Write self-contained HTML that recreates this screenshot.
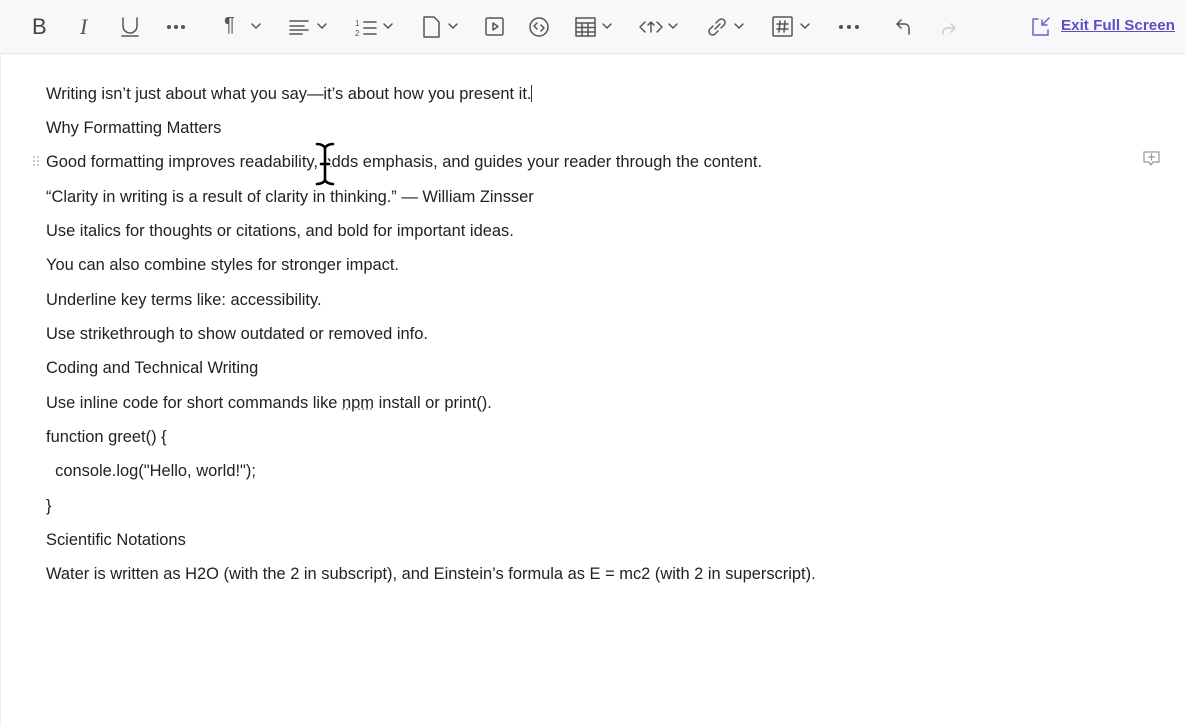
<!DOCTYPE html>
<html><head><meta charset="utf-8"><style>
*{margin:0;padding:0;box-sizing:border-box}
body{width:1186px;height:726px;background:#fff;font-family:"Liberation Sans",sans-serif;overflow:hidden;position:relative}
.tb{position:absolute;left:0;top:0;width:1186px;height:54px;background:#f8f8fb;border-bottom:1px solid #e6e6ec}
.ic{position:absolute;top:14px}
svg{stroke:#555;fill:none;stroke-width:1.5;stroke-linecap:round;stroke-linejoin:round}
.chev{position:absolute;top:22px}
.exit{position:absolute;left:1061px;top:17px;font-size:15.2px;font-weight:bold;color:#5b4fc4;text-decoration:underline}
.lines{position:absolute;left:46px;top:76.5px;font-size:16.45px;color:#222;line-height:34.35px}
.edge{position:absolute;left:0;top:54px;width:1px;height:672px;background:#eee}
</style></head><body>
<div class="tb">
<div class="ic" style="left:32px;top:14px;font-size:22px;color:#444;font-family:'Liberation Sans'">B</div>
<div class="ic" style="left:80px;top:14px;font-size:22px;color:#555;font-style:italic;font-family:'Liberation Serif'">I</div>
<svg class="ic" style="left:120px" width="20" height="26"><path d="M3 4v8a7 7 0 0 0 14 0V4M2 22h16"/></svg>
<svg class="ic" style="left:165px" width="24" height="26"><circle cx="4" cy="13" r="1.3" fill="#555"/><circle cx="11" cy="13" r="1.3" fill="#555"/><circle cx="18" cy="13" r="1.3" fill="#555"/></svg>
<div class="ic" style="left:224px;top:14px;font-size:20px;color:#555">¶</div>
<svg class="chev" style="left:251px" width="10" height="8"><path d="M1 2l4 4 4-4"/></svg>
<svg class="ic" style="left:288px" width="22" height="26"><path d="M2 7h18M2 12h14M2 16h18M2 20h12"/></svg>
<svg class="chev" style="left:317px" width="10" height="8"><path d="M1 2l4 4 4-4"/></svg>
<svg class="ic" style="left:354px" width="24" height="26"><path d="M10 8h12M10 14h12M10 20h12" /><text x="1" y="12" font-size="8" fill="#555" stroke="none">1</text><text x="1" y="22" font-size="8" fill="#555" stroke="none">2</text></svg>
<svg class="chev" style="left:383px" width="10" height="8"><path d="M1 2l4 4 4-4"/></svg>
<svg class="ic" style="left:421px" width="22" height="26"><path d="M3 3h10l5 5v15H3z"/></svg>
<svg class="chev" style="left:448px" width="10" height="8"><path d="M1 2l4 4 4-4"/></svg>
<svg class="ic" style="left:484px" width="22" height="26"><rect x="2" y="4" width="17" height="17" rx="1.5"/><path d="M9 9l5 3.5-5 3.5z"/></svg>
<svg class="ic" style="left:528px" width="24" height="26"><circle cx="11" cy="13" r="9"/><path d="M9 9l-3 3 3 3M13 11l3 3-3 3"/></svg>
<svg class="ic" style="left:574px" width="24" height="26"><rect x="2" y="4" width="19" height="18"/><path d="M2 9h19M2 13.5h19M2 18h19M8 9v13M14 9v13"/></svg>
<svg class="chev" style="left:602px" width="10" height="8"><path d="M1 2l4 4 4-4"/></svg>
<svg class="ic" style="left:638px" width="26" height="26"><path d="M7 8l-5 5 5 5M19 8l5 5-5 5M13 18V8M10 11l3-3 3 3"/></svg>
<svg class="chev" style="left:668px" width="10" height="8"><path d="M1 2l4 4 4-4"/></svg>
<svg class="ic" style="left:705px" width="24" height="26"><path d="M10 15l5-5M8 12l-3 3a3.5 3.5 0 0 0 5 5l3-3M16 14l3-3a3.5 3.5 0 0 0-5-5l-3 3"/></svg>
<svg class="chev" style="left:734px" width="10" height="8"><path d="M1 2l4 4 4-4"/></svg>
<svg class="ic" style="left:771px" width="24" height="26"><rect x="2" y="3" width="19" height="19" rx="1"/><path d="M9 7l-1 11M14 7l-1 11M6 10h11M6 15h11"/></svg>
<svg class="chev" style="left:800px" width="10" height="8"><path d="M1 2l4 4 4-4"/></svg>
<svg class="ic" style="left:838px" width="24" height="26"><circle cx="3" cy="13" r="1.3" fill="#555"/><circle cx="11" cy="13" r="1.3" fill="#555"/><circle cx="19" cy="13" r="1.3" fill="#555"/></svg>
<svg class="ic" style="left:894px" width="20" height="26"><path d="M7 6l-4 4 4 4M3 10h8a4 4 0 0 1 4 4v6"/></svg>
<svg class="ic" style="left:938px;stroke:#ccc" width="20" height="26"><path d="M13 10l4 4-4 4M17 14H9a4 4 0 0 0-4 4v2"/></svg>
<svg class="ic" style="left:1030px;top:16px;stroke:#6b63c8" width="22" height="22"><path d="M8 3H3v16h15v-5M12 9l7-7M12 4v5h5"/></svg>
<div class="exit">Exit Full Screen</div>
</div>
<div class="edge"></div>
<svg style="position:absolute;left:32px;top:155px" width="8" height="12"><g fill="#bbb" stroke="none"><circle cx="2" cy="2" r="1"/><circle cx="6" cy="2" r="1"/><circle cx="2" cy="6" r="1"/><circle cx="6" cy="6" r="1"/><circle cx="2" cy="10" r="1"/><circle cx="6" cy="10" r="1"/></g></svg>
<svg style="position:absolute;left:1142px;top:150px;stroke:#999;stroke-width:1.2" width="20" height="18"><path d="M2 2h15v10h-6l-2 3-2-3H2zM9.5 4v6M6.5 7h6"/></svg>
<div class="lines">
<div>Writing isn’t just about what you say—it’s about how you present it.<span style="display:inline-block;width:1px;height:17px;background:#333;vertical-align:-3px"></span></div>
<div>Why Formatting Matters</div>
<div>Good formatting improves readability, adds emphasis, and guides your reader through the content.</div>
<div>“Clarity in writing is a result of clarity in thinking.” — William Zinsser</div>
<div>Use italics for thoughts or citations, and bold for important ideas.</div>
<div>You can also combine styles for stronger impact.</div>
<div>Underline key terms like: accessibility.</div>
<div>Use strikethrough to show outdated or removed info.</div>
<div>Coding and Technical Writing</div>
<div>Use inline code for short commands like <span style="text-decoration:underline dotted #999">npm</span> install or print().</div>
<div>function greet() {</div>
<div>&nbsp; console.log("Hello, world!");</div>
<div>}</div>
<div>Scientific Notations</div>
<div>Water is written as H2O (with the 2 in subscript), and Einstein’s formula as E = mc2 (with 2 in superscript).</div>
</div>
<svg style="position:absolute;left:313px;top:142px;stroke:#000;stroke-width:2.6" width="24" height="44"><path d="M4 2c4 0 8 2 8 5v30c0 3-4 5-8 5M20 2c-4 0-8 2-8 5v30c0 3 4 5 8 5M8 22h8" stroke="#fff" stroke-width="5.5"/><path d="M4 2c4 0 8 2 8 5v30c0 3-4 5-8 5M20 2c-4 0-8 2-8 5v30c0 3 4 5 8 5M8 22h8"/></svg>
</body></html>
